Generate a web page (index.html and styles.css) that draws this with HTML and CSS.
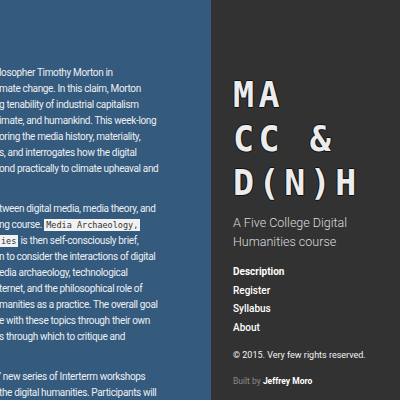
FILE: index.html
```html
<!DOCTYPE html>
<html>
<head>
<meta charset="utf-8">
<link rel="stylesheet" href="styles.css">
</head>
<body>
<main class="content">
  <p class="para">losopher Timothy Morton in<br>mate change. In this claim, Morton<br>g tenability of industrial capitalism<br>imate, and humankind. This week-long<br>oring the media history, materiality,<br>s, and interrogates how the digital<br>ond practically to climate upheaval and</p>
  <p class="para">tween digital media, media theory, and<br>ng course. <code class="code">Media Archaeology,</code><br><code class="code">ies</code> is then self-consciously brief,<br>n to consider the interactions of digital<br>edia archaeology, technological<br>ternet, and the philosophical role of<br>manities as a practice. The overall goal<br>e with these topics through their own<br>s through which to critique and</p>
  <p class="para">’ new series of Interterm workshops<br>the digital humanities. Participants will</p>
</main>
<aside class="sidebar">
  <h1 class="title">MA<br>CC &amp;<br>D(N)H</h1>
  <p class="subtitle">A Five College Digital Humanities course</p>
  <nav class="nav">
    <a class="nav-link active">Description</a>
    <a class="nav-link">Register</a>
    <a class="nav-link">Syllabus</a>
    <a class="nav-link">About</a>
  </nav>
  <p class="copy">© 2015. Very few rights reserved.</p>
  <p class="built">Built by <strong class="author">Jeffrey Moro</strong></p>
</aside>
</body>
</html>
```
FILE: styles.css
```css
html, body {
  margin: 0;
  padding: 0;
  height: 100%;
  overflow: hidden;
}
body {
  display: flex;
  font-family: Roboto, "Liberation Sans", sans-serif;
}
.content {
  flex: 1;
  background: #345a7e;
  color: #eceff2;
  padding-top: 65px;
  overflow: hidden;
}
.para {
  margin: 0 0 24px -1px;
  font-size: 10px;
  line-height: 16px;
  letter-spacing: -0.35px;
  white-space: nowrap;
}
.code {
  font-family: "DejaVu Sans Mono", monospace;
  font-size: 8.5px;
  letter-spacing: 0;
  background: #f2f2f2;
  color: #333;
  padding: 1px 2px;
}
.sidebar {
  width: 189px;
  flex: none;
  background: #323232;
  color: #eee;
  padding: 73px 0 0 22px;
  box-sizing: border-box;
}
.title {
  margin: 0;
  font-family: "DejaVu Sans Mono", monospace;
  font-weight: bold;
  font-size: 35px;
  line-height: 44px;
  letter-spacing: 4.5px;
  color: #ececec;
  text-shadow: 1px 0 0 #111, -1px 0 0 #111, 0 1px 0 #111, 0 -1px 0 #111;
}
.subtitle {
  margin: 8px 0 0;
  width: 130px;
  font-size: 12.5px;
  line-height: 19px;
  font-weight: 300;
  color: #ddd;
}
.nav {
  display: flex;
  flex-direction: column;
  margin-top: 12px;
}
.nav-link {
  font-size: 10px;
  line-height: 18.5px;
  color: #fff;
  font-weight: 500;
}
.nav-link.active {
  font-weight: bold;
}
.copy {
  margin: 10px 0 0;
  font-size: 9px;
  line-height: 16px;
  color: #f2f2f2;
}
.built {
  margin: 12px 0 0;
  font-size: 8.5px;
  line-height: 12px;
  color: #8a8a8a;
}
.author {
  color: #fff;
}
```
